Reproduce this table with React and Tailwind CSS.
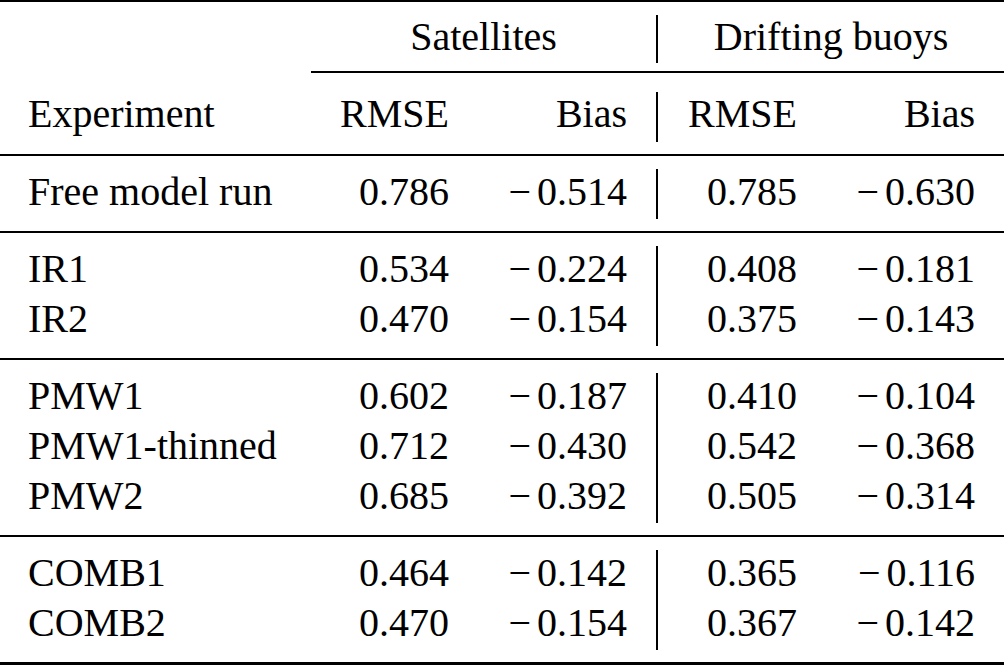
import React from "react";

const rows = [
  [["Free model run", "0.786", "−0.514", "0.785", "−0.630"]],
  [
    ["IR1", "0.534", "−0.224", "0.408", "−0.181"],
    ["IR2", "0.470", "−0.154", "0.375", "−0.143"],
  ],
  [
    ["PMW1", "0.602", "−0.187", "0.410", "−0.104"],
    ["PMW1-thinned", "0.712", "−0.430", "0.542", "−0.368"],
    ["PMW2", "0.685", "−0.392", "0.505", "−0.314"],
  ],
  [
    ["COMB1", "0.464", "−0.142", "0.365", "−0.116"],
    ["COMB2", "0.470", "−0.154", "0.367", "−0.142"],
  ],
];

const Num = ({ v }) =>
  v.startsWith("−") ? (
    <>
      <span className="mr-[6px]">−</span>
      {v.slice(1)}
    </>
  ) : (
    v
  );

const Rule = ({ h = "h-[2px]" }) => <div className={`${h} w-full bg-black`} />;

const Group = ({ items }) => (
  <div className="flex pt-[13px] pb-[12px]">
    <div className="w-[656px]">
      {items.map((r) => (
        <div key={r[0]} className="flex h-[50px] leading-[46px]">
          <div className="w-[311px] pl-[28px]">{r[0]}</div>
          <div className="w-[138px] text-right">{r[1]}</div>
          <div className="w-[178px] text-right">
            <Num v={r[2]} />
          </div>
        </div>
      ))}
    </div>
    <div className="w-[2px] bg-black" />
    <div className="flex-1">
      {items.map((r) => (
        <div key={r[0]} className="flex h-[50px] leading-[46px]">
          <div className="w-[139px] text-right">{r[3]}</div>
          <div className="w-[178px] text-right">
            <Num v={r[4]} />
          </div>
        </div>
      ))}
    </div>
  </div>
);

export default function App() {
  return (
    <div className="w-[1004px] h-[669px] bg-white text-black text-[40px] font-['Liberation_Serif','Times_New_Roman',serif]">
      <Rule />

      {/* group headers */}
      <div className="flex pt-[13px] pb-[8px] leading-[44px]">
        <div className="w-[311px]" />
        <div className="w-[345px] text-center">Satellites</div>
        <div className="w-[2px] h-[48px] bg-black" />
        <div className="flex-1 text-center">Drifting buoys</div>
      </div>
      <div className="flex">
        <div className="w-[311px]" />
        <div className="flex-1 h-[2px] bg-black" />
      </div>

      {/* column headers */}
      <div className="flex pt-[19px] pb-[12px] leading-[43px]">
        <div className="flex w-[656px] h-[50px]">
          <div className="w-[311px] pl-[28px]">Experiment</div>
          <div className="w-[138px] text-right">RMSE</div>
          <div className="w-[178px] text-right">Bias</div>
        </div>
        <div className="w-[2px] bg-black" />
        <div className="flex flex-1">
          <div className="w-[139px] text-right">RMSE</div>
          <div className="w-[178px] text-right">Bias</div>
        </div>
      </div>
      <Rule />

      {rows.map((g, i) => (
        <React.Fragment key={i}>
          <Group items={g} />
          {i < rows.length - 1 ? <Rule /> : <Rule h="h-[3px]" />}
        </React.Fragment>
      ))}
    </div>
  );
}
